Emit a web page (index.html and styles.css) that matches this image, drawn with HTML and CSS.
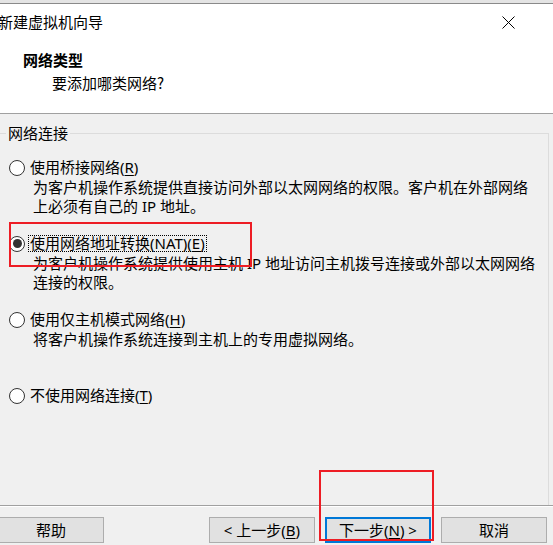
FILE: index.html
```html
<!DOCTYPE html>
<html lang="zh-CN">
<head>
<meta charset="utf-8">
<title>新建虚拟机向导</title>
<link rel="stylesheet" href="styles.css">
</head>
<body>
<div class="win">
  <div class="bgstrip"></div>
  <div class="top">
    <div class="titlebar">
      <span class="title">新建虚拟机向导</span>
      <svg class="close" width="13" height="13" viewBox="0 0 13 13"><path d="M0.5 0.5 L12.5 12.5 M12.5 0.5 L0.5 12.5" stroke="#000" stroke-width="1" fill="none"/></svg>
    </div>
    <div class="head">
      <div class="h1">网络类型</div>
      <div class="h2">要添加哪类网络?</div>
    </div>
  </div>
  <div class="content">
    <fieldset class="group">
      <legend class="legend">网络连接</legend>
      <div class="options">
        <div class="option">
          <div class="row"><span class="radio"></span><span class="label">使用桥接网络(<u>R</u>)</span></div>
          <div class="desc">为客户机操作系统提供直接访问外部以太网网络的权限。客户机在外部网络<br>上必须有自己的 IP 地址。</div>
        </div>
        <div class="option">
          <div class="row"><span class="radio checked"></span><span class="label focus">使用网络地址转换(NAT)(<u>E</u>)</span></div>
          <div class="desc">为客户机操作系统提供使用主机 IP 地址访问主机拨号连接或外部以太网网络<br>连接的权限。</div>
        </div>
        <div class="option">
          <div class="row"><span class="radio"></span><span class="label">使用仅主机模式网络(<u>H</u>)</span></div>
          <div class="desc">将客户机操作系统连接到主机上的专用虚拟网络。</div>
        </div>
        <div class="option">
          <div class="row"><span class="radio"></span><span class="label">不使用网络连接(<u>T</u>)</span></div>
        </div>
      </div>
    </fieldset>
  </div>
  <div class="sep"></div>
  <div class="footer">
    <button class="btn help">帮助</button>
    <div class="spacer"></div>
    <button class="btn">&lt; 上一步(<u>B</u>)</button>
    <button class="btn primary">下一步(<u>N</u>) &gt;</button>
    <button class="btn">取消</button>
  </div>
  <div class="mark mark-nat"></div>
  <div class="mark mark-next"></div>
</div>
</body>
</html>
```
FILE: styles.css
```css
* { box-sizing: border-box; }
html, body { margin: 0; padding: 0; }
body {
  width: 553px;
  height: 545px;
  overflow: hidden;
  background: #f0f0f0;
  font-family: "Noto Sans", "Noto Sans CJK SC", sans-serif;
  font-size: 15px;
  color: #000;
}
.win {
  position: relative;
  width: 553px;
  height: 545px;
  display: flex;
  flex-direction: column;
  background: #f0f0f0;
  overflow: hidden;
}
.bgstrip {
  height: 4px;
  background: #e4e4e4;
  border-bottom: 1px solid #8a8a8a;
  flex: none;
}
.top {
  background: #fff;
  height: 110px;
  border-bottom: 1px solid #a0a0a0;
  flex: none;
}
.titlebar {
  height: 36px;
  display: flex;
  align-items: center;
  justify-content: space-between;
  padding-right: 38px;
}
.title {
  line-height: 36px;
  margin-left: -2px;
  font-family: "Noto Sans CJK SC", sans-serif;
}
.close { display: block; }
.head {
  padding-top: 10px;
}
.h1 {
  font-family: "Noto Sans CJK SC", sans-serif;
  font-weight: bold;
  line-height: 20px;
  padding-left: 23px;
}
.h2 {
  font-family: "Noto Sans CJK SC", sans-serif;
  line-height: 20px;
  margin-top: 3px;
  padding-left: 52px;
}
.content {
  height: 391px;
  flex: none;
  padding-top: 9px;
}
.group {
  margin: 0 4px 0 -2px;
  padding: 14px 0 0 0;
  border: 1px solid #dcdcdc;
  border-bottom: none;
  height: 382px;
  min-width: 0;
}
.legend {
  padding: 0 2px;
  margin-left: 7px;
  line-height: 20px;
  font-family: "Noto Sans CJK SC", sans-serif;
}
.options {
  padding-left: 10px;
}
.option {
  margin-bottom: 17px;
}
.row {
  height: 21px;
  display: flex;
  align-items: center;
}
.radio {
  width: 16px;
  height: 16px;
  border: 1.5px solid #333;
  border-radius: 50%;
  background: #fff;
  margin-right: 5px;
  flex: none;
  display: flex;
  align-items: center;
  justify-content: center;
}
.radio.checked::after {
  content: "";
  width: 9px;
  height: 9px;
  border-radius: 50%;
  background: #333;
}
.label {
  margin-left: -2px;
  padding: 0 1px;
  border: 1px dotted transparent;
  line-height: 15px;
  white-space: nowrap;
}
.label.focus { border-color: #000; }
.desc {
  padding-left: 24px;
  line-height: 19px;
  min-height: 38px;
  white-space: nowrap;
}
u { text-decoration: underline; text-underline-offset: 2px; }
.sep {
  height: 2px;
  border-top: 1px solid #a0a0a0;
  border-bottom: 1px solid #fff;
  flex: none;
}
.footer {
  display: flex;
  align-items: flex-start;
  padding-top: 10px;
  padding-right: 6px;
  gap: 10px;
}
.spacer { flex: 1; }
.btn {
  width: 106px;
  height: 26px;
  background: #e1e1e1;
  border: 1px solid #adadad;
  font-family: "Noto Sans", "Noto Sans CJK SC", sans-serif;
  font-size: 15px;
  color: #000;
  padding: 0;
  line-height: 22px;
}
.btn.help { margin-left: -2px; }
.btn.primary {
  border-color: #0078d7;
  box-shadow: inset 0 0 0 1px #0078d7;
}
.mark {
  position: absolute;
  border: 2px solid #ed1c24;
  pointer-events: none;
}
.mark-nat { left: 9px; top: 222px; width: 243px; height: 45px; }
.mark-next { left: 319px; top: 470px; width: 115px; height: 71px; }
```
